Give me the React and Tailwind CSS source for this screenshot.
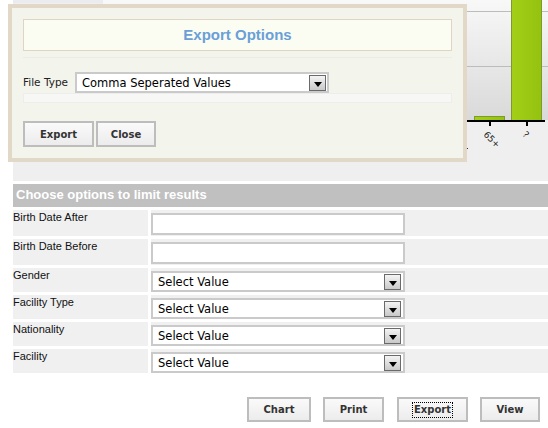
import React from 'react';
import clsx from 'clsx';

const verdana = { fontFamily: '"DejaVu Sans", Verdana, sans-serif' };
const arial = { fontFamily: '"Liberation Sans", Arial, sans-serif' };

// little grey drop-down button with a black arrow
const DropArrow = ({ className }) => (
  <span
    className={clsx(
      'flex items-end justify-center w-[17px] h-[16px] border border-[#6a6a6a] bg-gradient-to-b from-[#f4f4f4] to-[#c9c9c9] pb-[3px]',
      className
    )}
  >
    <svg width="8" height="5" viewBox="0 0 8 5">
      <path d="M0 0 H8 L4 5 Z" fill="#000" />
    </svg>
  </span>
);

const SelectBox = ({ value, className, arrowClass }) => (
  <div className={clsx('flex items-center bg-white border-2 border-[#cacaca] h-[21px]', className)}>
    <span className="flex-1 pl-[5px] pt-[3px] text-[11.5px] text-black leading-none" style={verdana}>
      {value}
    </span>
    <DropArrow className={arrowClass} />
  </div>
);

const GreyButton = ({ children, className, focused }) => (
  <button
    className={clsx(
      'flex items-center justify-center border-2 border-[#bdbdbd] bg-gradient-to-b from-[#fafafa] to-[#ececec] text-[10px] font-bold text-[#333]',
      className
    )}
    style={verdana}
  >
    {focused ? (
      <span className="outline-1 outline-dotted outline-black px-[1px] leading-[14px]">{children}</span>
    ) : (
      children
    )}
  </button>
);

const Chart = () => (
  <svg width="535" height="181" viewBox="0 0 535 181" className="block">
    <defs>
      <linearGradient id="plotbg" x1="0" y1="0" x2="0" y2="1">
        <stop offset="0" stopColor="#f8f8f8" />
        <stop offset="1" stopColor="#d9d9d9" />
      </linearGradient>
      <linearGradient id="bar" x1="0" y1="0" x2="1" y2="0">
        <stop offset="0" stopColor="#a3cf17" />
        <stop offset="1" stopColor="#94c20f" />
      </linearGradient>
    </defs>
    <rect x="0" y="0" width="90" height="3" fill="#ececf0" />
    <rect x="90" y="0" width="445" height="120" fill="url(#plotbg)" />
    <line x1="90" y1="11.5" x2="535" y2="11.5" stroke="#bcbcbc" />
    <line x1="90" y1="66.5" x2="535" y2="66.5" stroke="#bcbcbc" />
    <rect x="461.5" y="116.5" width="30" height="4" fill="url(#bar)" stroke="#7d9a2a" />
    <rect x="498.5" y="-2" width="30" height="122.5" fill="url(#bar)" stroke="#7d9a2a" />
    <rect x="90" y="120" width="442" height="2" fill="#000" />
    <rect x="476" y="121" width="2" height="5" fill="#000" />
    <rect x="513" y="121" width="2" height="5" fill="#000" />
    <text x="470" y="135" fontSize="9" fill="#222" transform="rotate(45 470 135)" style={verdana}>
      65+
    </text>
    <text x="509" y="135" fontSize="9" fill="#222" transform="rotate(45 509 135)" style={verdana}>
      ?
    </text>
    <rect x="454" y="148" width="1" height="1" fill="#333" />
  </svg>
);

const rows = [
  { label: 'Birth Date After', type: 'text', h: 'h-[26px]' },
  { label: 'Birth Date Before', type: 'text', h: 'h-[26px]' },
  { label: 'Gender', type: 'select', h: 'h-[24px]' },
  { label: 'Facility Type', type: 'select', h: 'h-[24px]' },
  { label: 'Nationality', type: 'select', h: 'h-[24px]' },
  { label: 'Facility', type: 'select', h: 'h-[24px]' },
];

export default function App() {
  return (
    <div className="relative w-[548px] h-[428px] bg-white overflow-hidden" style={arial}>
      {/* chart panel behind the dialog */}
      <div className="ml-[13px] h-[181px] bg-[#efefef]">
        <Chart />
      </div>

      {/* filter form */}
      <div className="mt-[3px] ml-[13px] h-[23px] bg-[#c0c0c0] flex items-center pl-[3px] pb-[1px]">
        <span className="text-white font-bold text-[13px]">Choose options to limit results</span>
      </div>

      <div className="ml-[13px] mt-[3px] flex flex-col gap-[3px]">
        {rows.map((r) => (
          <div key={r.label} className={clsx('flex gap-[3px]', r.h)}>
            <div className="w-[135px] bg-[#f0f0f0] text-[11px] leading-[13px] text-[#111] pt-[1px]">
              {r.label}
            </div>
            <div className="flex-1 bg-[#f0f0f0] pt-[3px]">
              {r.type === 'text' ? (
                <div className="w-[254px] h-[22px] bg-white border-2 border-[#cacaca]" />
              ) : (
                <SelectBox value="Select Value" className="w-[254px]" arrowClass="mr-[2px]" />
              )}
            </div>
          </div>
        ))}
      </div>

      <div className="mt-[24px] flex justify-end gap-[12px] pr-[8px]">
        <GreyButton className="w-[64px] h-[25px]">Chart</GreyButton>
        <GreyButton className="w-[61px] h-[25px]">Print</GreyButton>
        <GreyButton className="w-[71px] h-[25px] ml-[1px]" focused>
          Export
        </GreyButton>
        <GreyButton className="w-[60px] h-[25px]">View</GreyButton>
      </div>

      {/* Export Options dialog floating over the chart */}
      <div className="absolute left-[8px] top-[4px] w-[459px] h-[158px] border-4 border-[#e2d8c8] bg-[#f3f5ed] px-[11px] pt-[11px]">
        <div className="h-[32px] bg-[#fbfdf3] border border-[#e0d5c5] flex items-center justify-center">
          <span className="text-[15px] font-bold text-[#6a9fd8]">Export Options</span>
        </div>
        <div className="mt-[6px] h-px bg-[#eaede5]" />
        <div className="mt-[14px] flex items-center gap-[4px]">
          <span className="w-[48px] pt-[1px] text-[10.5px] text-[#222]" style={verdana}>
            File Type
          </span>
          <SelectBox value="Comma Seperated Values" className="w-[254px]" arrowClass="mr-[1px]" />
        </div>
        <div className="h-[10px] bg-[#f7f7f6] border border-[#ededeb]" />
        <div className="mt-[18px] flex gap-[2px]">
          <GreyButton className="w-[71px] h-[26px]">Export</GreyButton>
          <GreyButton className="w-[60px] h-[26px]">Close</GreyButton>
        </div>
      </div>
    </div>
  );
}
